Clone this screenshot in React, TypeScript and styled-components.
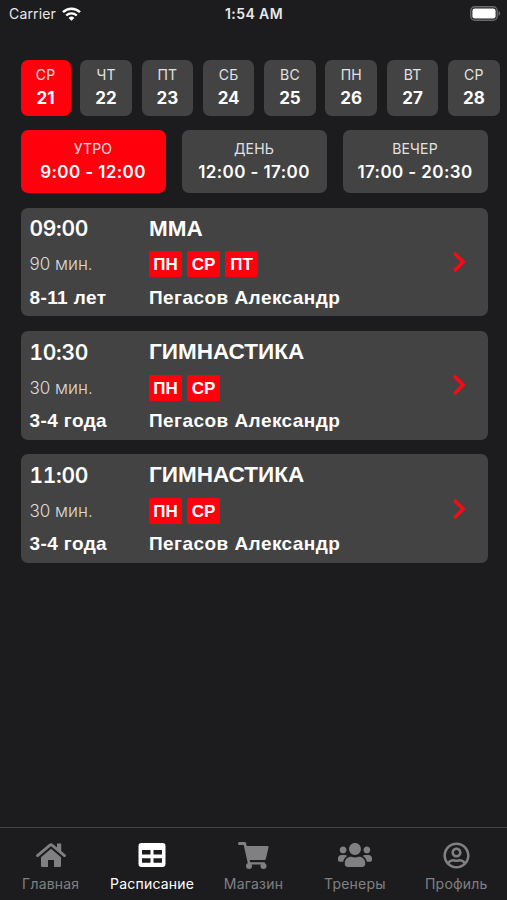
import React from "react";
import styled, { createGlobalStyle, css } from "styled-components";
import { FaUsers, FaRegUserCircle } from "react-icons/fa";

const GlobalStyle = createGlobalStyle`
  *, *::before, *::after { box-sizing: border-box; }
  body { margin: 0; background: #1c1c1e; }
`;

const Screen = styled.div`
  width: 507px;
  height: 900px;
  display: flex;
  flex-direction: column;
  overflow: hidden;
  background: #1c1c1e;
  color: #fff;
  font-family: Inter, "Liberation Sans", sans-serif;
`;

const StatusBar = styled.header`
  height: 27px;
  display: grid;
  grid-template-columns: 1fr auto 1fr;
  align-items: center;
  padding: 0 6px 0 9px;
  color: #e8e8e8;
`;

const Carrier = styled.div`
  display: flex;
  align-items: center;
  gap: 6px;
  font-size: 14px;
  letter-spacing: 0.15px;
`;

const Clock = styled.div`
  font-size: 14px;
  font-weight: 600;
  letter-spacing: 0.4px;
  margin-left: -2px;
`;

const BatterySlot = styled.div`
  display: flex;
  justify-content: flex-end;
`;

const Content = styled.main`
  flex: 1;
  display: flex;
  flex-direction: column;
  gap: 14.7px;
  padding: 32.5px 19.5px 0 20.5px;
`;

const DayRow = styled.div`
  display: flex;
  gap: 9.8px;
`;

const tile = css<{ $active?: boolean }>`
  display: flex;
  flex-direction: column;
  align-items: center;
  border-radius: 7px;
  background: ${(p) => (p.$active ? "#ff000c" : "#434343")};
`;

const DayTile = styled.div<{ $active?: boolean }>`
  ${tile}
  flex: 0 0 ${(p) => (p.$active ? 50 : 51.5)}px;
  height: 56px;
  padding-top: 5px;
`;

const TileLabel = styled.span`
  font-size: 14px;
  line-height: 20px;
  color: #e2e2e2;
  letter-spacing: 0.2px;
`;

const DayNumber = styled.span`
  font-size: 17px;
  font-weight: 700;
  line-height: 26px;
`;

const PeriodRow = styled.div`
  display: grid;
  grid-template-columns: repeat(3, 1fr);
  gap: 16px;
`;

const PeriodTile = styled.div<{ $active?: boolean }>`
  ${tile}
  height: 63px;
  padding-top: 8.5px;
`;

const PeriodTime = styled.span`
  font-size: 17px;
  font-weight: 600;
  line-height: 26px;
  letter-spacing: 0.4px;
`;

const Card = styled.article`
  height: 108.6px;
  display: grid;
  grid-template-columns: 119.5px 1fr 15px;
  align-items: center;
  padding: 0 20.5px 0 9px;
  border-radius: 7px;
  background: #434343;
`;

const Column = styled.div`
  height: 100%;
  display: grid;
  grid-template-rows: 42px 29px 1fr;
  justify-items: start;
  align-items: center;
`;

const StartTime = styled.div`
  font-size: 21px;
  font-weight: 600;
  font-feature-settings: "tnum";
  letter-spacing: -0.3px;
`;

const Duration = styled.div`
  font-size: 17px;
  font-weight: 300;
  color: #dcdcdc;
`;

const Detail = styled.div<{ $spacing: number }>`
  font-family: "Liberation Sans", sans-serif;
  font-size: 19px;
  font-weight: 700;
  letter-spacing: ${(p) => p.$spacing}px;
`;

const ClassName = styled.div`
  font-family: "Liberation Sans", sans-serif;
  font-size: 22.5px;
  font-weight: 700;
`;

const Badges = styled.div`
  display: flex;
  gap: 5px;
`;

const Badge = styled.span`
  min-width: 33px;
  height: 26px;
  padding: 0 4px;
  border-radius: 2px;
  background: #ff000c;
  font-family: "Liberation Sans", sans-serif;
  font-size: 17px;
  font-weight: 700;
  line-height: 27px;
  text-align: center;
`;

const TabBar = styled.nav`
  height: 73px;
  display: grid;
  grid-template-columns: repeat(5, 1fr);
  border-top: 1px solid #444446;
`;

const Tab = styled.div<{ $active?: boolean }>`
  display: flex;
  flex-direction: column;
  align-items: center;
  gap: 4px;
  padding-top: 12px;
  font-size: 14px;
  line-height: 20px;
  letter-spacing: 0.2px;
  color: ${(p) => (p.$active ? "#ffffff" : "#808082")};
`;

const IconBox = styled.span`
  height: 30px;
  display: flex;
  align-items: center;
`;

const HomeIcon = () => (
  <svg width="30" height="26" viewBox="0 0 30 26">
    <path d="M1.5 13.6 14 3.2q1-.8 2 0l12.5 10.4" fill="none" stroke="currentColor" strokeWidth="2.8" strokeLinecap="round" />
    <path d="M21 1.6h4.2v9L21 7ZM15 6.8l10 8.4v8.6q0 1.2-1.2 1.2H18v-7h-6v7H6.200q-1.200 0-1.200-1.200v-8.600Z" fill="currentColor" />
  </svg>
);

const TableIcon = () => (
  <svg width="28" height="26" viewBox="0 0 28 26">
    <path
      fillRule="evenodd"
      fill="currentColor"
      d="M3.500 1h21q3 0 3 3v18q0 3-3 3h-21q-3 0-3-3V4q0-3 3-3ZM4 8v4.500h8.500V8ZM15.500 8v4.500H24V8ZM4 16.200v4.500h8.500v-4.500ZM15.500 16.200v4.500H24v-4.500Z"
    />
  </svg>
);

const CartIcon = () => (
  <svg width="31" height="29" viewBox="0 0 31 29" fill="currentColor">
    <path d="M1.200 1h5.300q1.300 0 1.600 1.300L8.700 5h20.600q1.500 0 1.200 1.500l-2.600 11.300q-.3 1.200-1.500 1.200H11.700l.5 2.300h14.600v2.300H10.100L5.700 4H1.200Q0 4 0 2.500T1.200 1Z" />
    <circle cx="11" cy="25" r="3" />
    <circle cx="25.500" cy="25" r="3" />
  </svg>
);

const days = [
  ["СР", 21], ["ЧТ", 22], ["ПТ", 23], ["СБ", 24],
  ["ВС", 25], ["ПН", 26], ["ВТ", 27], ["СР", 28],
] as const;

const periods = [
  ["УТРО", "9:00 - 12:00"],
  ["ДЕНЬ", "12:00 - 17:00"],
  ["ВЕЧЕР", "17:00 - 20:30"],
];

const classes = [
  { time: "09:00", length: "90 мин.", age: "8-11 лет", name: "ММА", on: ["ПН", "СР", "ПТ"] },
  { time: "10:30", length: "30 мин.", age: "3-4 года", name: "ГИМНАСТИКА", on: ["ПН", "СР"] },
  { time: "11:00", length: "30 мин.", age: "3-4 года", name: "ГИМНАСТИКА", on: ["ПН", "СР"] },
];

const tabs = [
  { label: "Главная", icon: <HomeIcon /> },
  { label: "Расписание", icon: <TableIcon /> },
  { label: "Магазин", icon: <CartIcon /> },
  { label: "Тренеры", icon: <FaUsers size={34} /> },
  { label: "Профиль", icon: <FaRegUserCircle size={27} /> },
];

const WifiIcon = () => (
  <svg width="19" height="14" viewBox="0 0 19 14" fill="none" stroke="#fff" strokeWidth="2.4">
    <path d="M1 5.200a12.200 12.200 0 0 1 17 0" />
    <path d="M4.200 8.500a7.600 7.600 0 0 1 10.600 0" />
    <path d="M9.500 13.800 6.600 10.900a4.100 4.100 0 0 1 5.800 0Z" fill="#fff" stroke="none" />
  </svg>
);

const BatteryIcon = () => (
  <svg width="31" height="15" viewBox="0 0 31 15">
    <rect x="0.8" y="0.8" width="26.4" height="13.4" rx="4" fill="none" stroke="#6b6b6d" strokeWidth="1.4" />
    <rect x="2.4" y="2.4" width="23.2" height="10.2" rx="2.3" fill="#fff" />
    <path d="M28.600 5c2.100.8 2.100 4.200 0 5Z" fill="#6b6b6d" />
  </svg>
);

const Chevron = () => (
  <svg width="15" height="22" viewBox="0 0 15 22" fill="none" stroke="#fa0a12" strokeWidth="3.4">
    <path d="M2.200 2 11.200 11l-9 9" />
  </svg>
);

export default function App() {
  return (
    <Screen>
      <GlobalStyle />
      <StatusBar>
        <Carrier>Carrier <WifiIcon /></Carrier>
        <Clock>1:54 AM</Clock>
        <BatterySlot><BatteryIcon /></BatterySlot>
      </StatusBar>
      <Content>
        <DayRow>
          {days.map(([label, date], i) => (
            <DayTile key={date} $active={i === 0}>
              <TileLabel>{label}</TileLabel>
              <DayNumber>{date}</DayNumber>
            </DayTile>
          ))}
        </DayRow>
        <PeriodRow>
          {periods.map(([label, range], i) => (
            <PeriodTile key={label} $active={i === 0}>
              <TileLabel>{label}</TileLabel>
              <PeriodTime>{range}</PeriodTime>
            </PeriodTile>
          ))}
        </PeriodRow>
        {classes.map((c) => (
          <Card key={c.time}>
            <Column>
              <StartTime>{c.time}</StartTime>
              <Duration>{c.length}</Duration>
              <Detail $spacing={0.4}>{c.age}</Detail>
            </Column>
            <Column>
              <ClassName>{c.name}</ClassName>
              <Badges>{c.on.map((d) => <Badge key={d}>{d}</Badge>)}</Badges>
              <Detail $spacing={0.45}>Пегасов Александр</Detail>
            </Column>
            <Chevron />
          </Card>
        ))}
      </Content>
      <TabBar>
        {tabs.map((t, i) => (
          <Tab key={t.label} $active={i === 1}>
            <IconBox>{t.icon}</IconBox>
            {t.label}
          </Tab>
        ))}
      </TabBar>
    </Screen>
  );
}
